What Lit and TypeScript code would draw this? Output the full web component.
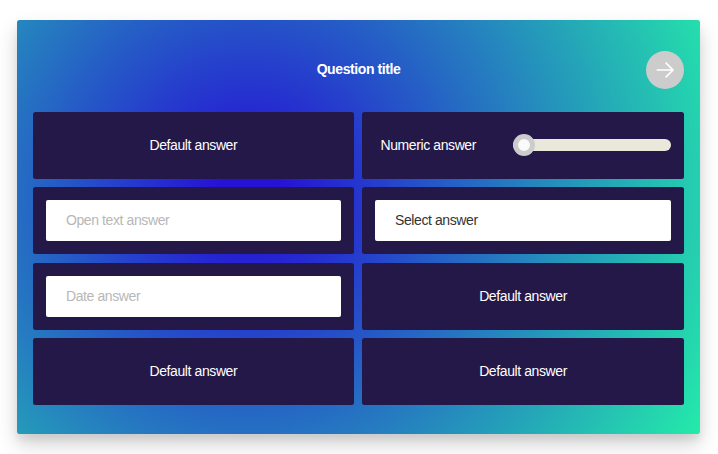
import { LitElement, html, css } from "lit";
import { customElement } from "lit/decorators.js";

@customElement("app-root")
export class AppRoot extends LitElement {
  static styles = css`
    :host {
      display: block;
      box-sizing: border-box;
      height: 454px;
      padding: 19.7px 17.7px 0 16.8px;
      overflow: hidden;
      background: #fff;
      color: #fff;
      font: 14px/20px "Liberation Sans", Arial, sans-serif;
      letter-spacing: -0.4px;
    }
    .card {
      box-sizing: border-box;
      height: 414.2px;
      padding: 0 16.2px;
      border-radius: 2.5px;
      background: radial-gradient(circle at 34% 42%, #2612d5 0%, #2612d5 6%, #24ebaa 100%);
      box-shadow: 0 10px 20px rgba(0, 0, 0, 0.19), 0 6px 6px rgba(0, 0, 0, 0.05);
    }
    .header {
      display: grid;
      grid-template-columns: 38px 1fr 38px;
      align-items: center;
      height: 91.9px;
      padding-top: 8px;
      box-sizing: border-box;
    }
    .title {
      grid-column: 2;
      margin: 0;
      font-size: 14px;
      line-height: 20px;
      font-weight: 700;
      text-align: center;
      padding-bottom: 0.6px;
    }
    .next {
      display: block;
      width: 38px;
      height: 38px;
      padding: 0;
      border: 0;
      border-radius: 50%;
      background: #ccc;
    }
    .next svg {
      display: block;
      width: 38px;
      height: 38px;
    }
    .answers {
      display: grid;
      grid-template-columns: 320.8px 1fr;
      grid-auto-rows: 67.3px;
      gap: 8.2px;
    }
    .answer {
      display: flex;
      align-items: center;
      justify-content: center;
      box-sizing: border-box;
      padding: 0 13px;
      border-radius: 2.5px;
      background: #241848;
    }
    .label {
      margin-bottom: 0.6px;
    }
    .numeric {
      justify-content: space-between;
      padding-left: 18.5px;
    }
    .field {
      flex: 1;
      box-sizing: border-box;
      height: 41px;
      padding: 0 20px;
      border-radius: 2px;
      background: #fff;
      line-height: 41px;
      color: #b7b7b7;
    }
    .select {
      color: #333;
    }
    .slider {
      display: flex;
      align-items: center;
      width: 158.5px;
      height: 12px;
      border-radius: 6px;
      background: #eae8db;
    }
    .thumb {
      flex: none;
      box-sizing: border-box;
      width: 22px;
      height: 22px;
      border: 5px solid #ccc;
      border-radius: 50%;
      background: #fafafa;
    }
  `;

  private choice() {
    return html`<div class="answer"><span class="label">Default answer</span></div>`;
  }

  render() {
    return html`
      <section class="card">
        <header class="header">
          <h1 class="title">Question title</h1>
          <button class="next" aria-label="Next">
            <svg viewBox="0 0 38 38" fill="none" stroke="#fff" stroke-width="1.6">
              <path d="M10.7 19H27M19.6 11.6L27 19L19.6 26.4" />
            </svg>
          </button>
        </header>
        <div class="answers">
          ${this.choice()}
          <div class="answer numeric">
            <span class="label">Numeric answer</span>
            <div class="slider"><div class="thumb"></div></div>
          </div>
          <div class="answer"><div class="field">Open text answer</div></div>
          <div class="answer"><div class="field select">Select answer</div></div>
          <div class="answer"><div class="field">Date answer</div></div>
          ${this.choice()} ${this.choice()} ${this.choice()}
        </div>
      </section>
    `;
  }
}
